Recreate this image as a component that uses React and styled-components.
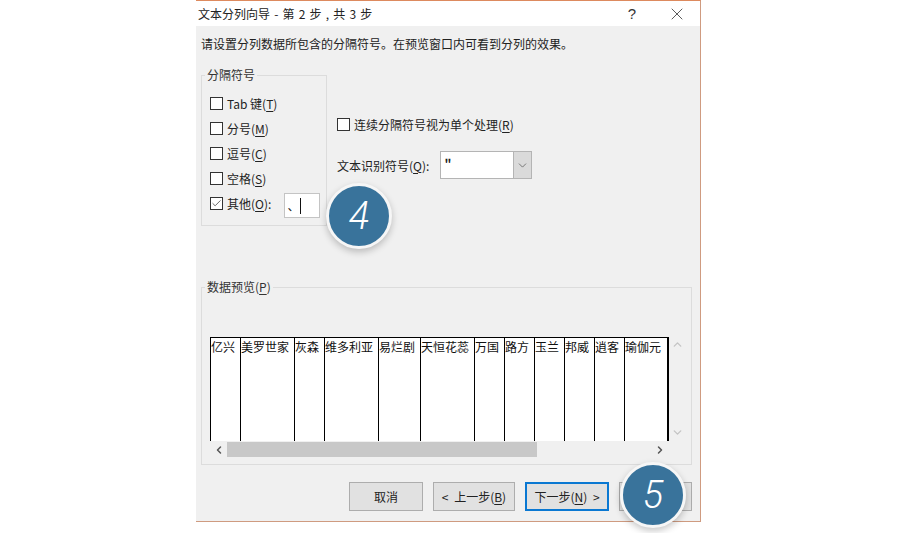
import styled, { createGlobalStyle } from "styled-components"
import { X, Check, ChevronDown, ChevronUp, ChevronLeft, ChevronRight } from "lucide-react"

const GlobalStyle = createGlobalStyle`
  html, body {
    margin: 0;
    background: #fff;
    font-family: "Noto Sans CJK SC", "Liberation Sans", sans-serif;
  }
  * { box-sizing: border-box; }
`

const Page = styled.div`
  position: relative;
  width: 900px;
  height: 533px;
  padding-left: 196px;
  overflow: hidden;
`

const Window = styled.div`
  width: 505px;
  height: 522px;
  display: flex;
  flex-direction: column;
  background: #f0f0f0;
  border-top: 1px solid #dd8a5e;
  border-right: 1px solid #cf9b80;
  border-bottom: 1px solid #cf9b80;
`

const TitleBar = styled.div`
  height: 25px;
  flex-shrink: 0;
  display: flex;
  align-items: center;
  padding-left: 2px;
  background: #fff;
  font-size: 12px;
  color: #222;
`

const TitleText = styled.span`
  flex: 1;
  word-spacing: 1.5px;
`

const HelpButton = styled.span`
  width: 20px;
  margin-right: 25px;
  text-align: center;
  font-family: "Liberation Sans", sans-serif;
  font-size: 15px;
  color: #333;
`

const CloseButton = styled.span`
  display: flex;
  margin-right: 13px;
  color: #222;
`

const Body = styled.div`
  flex: 1;
  padding: 10px 8px 0 5px;
  display: flex;
  flex-direction: column;
`

const Instruction = styled.div`
  height: 16px;
  font-size: 12px;
  line-height: 16px;
  color: #222;
`

const OptionsRow = styled.div`
  display: flex;
  margin-top: 15px;
`

const Group = styled.fieldset`
  margin: 0;
  min-width: 0;
  padding: ${(props) => props.$padding};
  width: ${(props) => props.$width}px;
  border: 1px solid #dcdcdc;
`

const GroupTitle = styled.legend`
  margin-left: -5px;
  padding: 0 2px;
  font-size: 12px;
  line-height: 16px;
  color: #333;
`

const CheckRow = styled.label`
  height: 25px;
  display: flex;
  align-items: center;
  gap: 4px;
  font-size: 12px;
  color: #222;
`

const Box = styled.span`
  width: 13px;
  height: 13px;
  flex-shrink: 0;
  display: flex;
  align-items: center;
  justify-content: center;
  background: #fff;
  border: 1px solid #333;
  color: #333;
`

const Key = styled.span`
  text-decoration: underline;
  text-underline-offset: 2px;
`

const OtherInput = styled.div`
  width: 36px;
  height: 25px;
  margin: 4px 0 0 9px;
  display: flex;
  align-items: center;
  padding-left: 2px;
  background: #fff;
  border: 1px solid #c4c4c4;
  font-size: 12px;
`

const Caret = styled.span`
  width: 1px;
  height: 16px;
  margin-left: 1px;
  background: #111;
`

const RightColumn = styled.div`
  display: flex;
  flex-direction: column;
  margin: 45px 0 0 10px;
`

const ComboRow = styled.div`
  display: flex;
  align-items: center;
  margin-top: 14px;
  font-size: 12px;
  color: #222;
`

const Combo = styled.div`
  width: 92px;
  height: 28px;
  margin-left: 11px;
  display: flex;
  background: #fff;
  border: 1px solid #b4b4b4;
`

const ComboValue = styled.span`
  flex: 1;
  padding: 2px 0 0 3px;
  font-size: 12px;
  font-weight: 700;
`

const ComboButton = styled.span`
  width: 18px;
  display: flex;
  align-items: center;
  justify-content: center;
  background: #dadada;
  border-left: 1px solid #b4b4b4;
  color: #444;
`

const PreviewGroup = styled(Group)`
  margin-top: 53px;
`

const PreviewRow = styled.div`
  display: flex;
`

const PreviewTable = styled.div`
  height: 104px;
  display: flex;
  background: #fff;
  border-top: 1px solid #000;
  border-right: 2px solid #000;
`

const Column = styled.div`
  width: ${(props) => props.$width}px;
  border-left: 1px solid #000;
  font-size: 12px;
  line-height: 17px;
  color: #111;
  white-space: nowrap;
`

const VerticalScroll = styled.div`
  width: 17px;
  height: 104px;
  display: flex;
  flex-direction: column;
  justify-content: space-between;
  align-items: center;
  padding: 1px 0 2px;
  color: #c4c4c4;
`

const HorizontalScroll = styled.div`
  width: 458px;
  height: 15px;
  margin-top: 1px;
  display: flex;
  align-items: center;
  color: #555;
`

const ArrowCell = styled.span`
  width: 17px;
  display: flex;
  justify-content: center;
`

const Track = styled.div`
  flex: 1;
  height: 15px;
`

const Thumb = styled.div`
  width: 310px;
  height: 15px;
  background: #c8c8c8;
`

const Footer = styled.div`
  display: flex;
  justify-content: flex-end;
  gap: 10px;
  margin-top: 17px;
`

const Button = styled.button`
  width: ${(props) => props.$width}px;
  height: 29px;
  padding: 0;
  background: #e1e1e1;
  border: ${(props) => (props.$primary ? "2px solid #0a78d2" : "1px solid #adadad")};
  font-family: inherit;
  font-size: 12px;
  word-spacing: 3px;
  color: #222;
`

const Badge = styled.div`
  position: absolute;
  left: ${(props) => props.$left}px;
  top: ${(props) => props.$top}px;
  width: 66px;
  height: 66px;
  display: flex;
  align-items: center;
  justify-content: center;
  border-radius: 50%;
  background: #39739b;
  border: 3px solid #f6f6f6;
  box-shadow: 0 3px 7px rgba(0, 0, 0, 0.22);
  font-family: Roboto, sans-serif;
  font-size: 38px;
  font-style: italic;
  font-weight: 300;
  color: #fff;
`

const columns = [
  ["亿兴", 30],
  ["美罗世家", 54],
  ["灰森", 30],
  ["维多利亚", 54],
  ["易烂剧", 42],
  ["天恒花蕊", 54],
  ["万国", 30],
  ["路方", 30],
  ["玉兰", 30],
  ["邦威", 30],
  ["逍客", 30],
  ["瑜伽元", 43],
]

const separators = [
  ["Tab 键", "T"],
  ["分号", "M"],
  ["逗号", "C"],
  ["空格", "S"],
]

const CheckItem = ({ label, accel, checked, children }) => (
  <CheckRow>
    <Box>{checked && <Check size={11} strokeWidth={1.6} />}</Box>
    <span>
      {label}(<Key>{accel}</Key>){children ? ":" : ""}
    </span>
    {children}
  </CheckRow>
)

export default function App() {
  return (
    <Page>
      <GlobalStyle />
      <Window>
        <TitleBar>
          <TitleText>文本分列向导 - 第 2 步 , 共 3 步</TitleText>
          <HelpButton>?</HelpButton>
          <CloseButton>
            <X size={20} strokeWidth={0.9} />
          </CloseButton>
        </TitleBar>
        <Body>
          <Instruction>请设置分列数据所包含的分隔符号。在预览窗口内可看到分列的效果。</Instruction>
          <OptionsRow>
            <Group $width={126} $padding="8px 0 9px 8px">
              <GroupTitle>分隔符号</GroupTitle>
              {separators.map(([label, accel]) => (
                <CheckItem key={accel} label={label} accel={accel} />
              ))}
              <CheckItem label="其他" accel="O" checked>
                <OtherInput>
                  、<Caret />
                </OtherInput>
              </CheckItem>
            </Group>
            <RightColumn>
              <CheckItem label="连续分隔符号视为单个处理" accel="R" />
              <ComboRow>
                <span>
                  文本识别符号(<Key>Q</Key>):
                </span>
                <Combo>
                  <ComboValue>"</ComboValue>
                  <ComboButton>
                    <ChevronDown size={13} strokeWidth={1.2} />
                  </ComboButton>
                </Combo>
              </ComboRow>
            </RightColumn>
          </OptionsRow>
          <PreviewGroup $width={491} $padding="42px 0 7px 8px">
            <GroupTitle>
              数据预览(<Key>P</Key>)
            </GroupTitle>
            <PreviewRow>
              <PreviewTable>
                {columns.map(([name, width]) => (
                  <Column key={name} $width={width}>
                    {name}
                  </Column>
                ))}
              </PreviewTable>
              <VerticalScroll>
                <ChevronUp size={13} strokeWidth={2.5} />
                <ChevronDown size={13} strokeWidth={2.5} />
              </VerticalScroll>
            </PreviewRow>
            <HorizontalScroll>
              <ArrowCell>
                <ChevronLeft size={12} strokeWidth={3} />
              </ArrowCell>
              <Track>
                <Thumb />
              </Track>
              <ArrowCell>
                <ChevronRight size={12} strokeWidth={3} />
              </ArrowCell>
            </HorizontalScroll>
          </PreviewGroup>
          <Footer>
            <Button $width={74}>取消</Button>
            <Button $width={82}>
              &lt; 上一步(<Key>B</Key>)
            </Button>
            <Button $width={84} $primary>
              下一步(<Key>N</Key>) &gt;
            </Button>
            <Button $width={73}>完成</Button>
          </Footer>
        </Body>
      </Window>
      <Badge $left={326} $top={183}>4</Badge>
      <Badge $left={620} $top={462}>5</Badge>
    </Page>
  )
}
